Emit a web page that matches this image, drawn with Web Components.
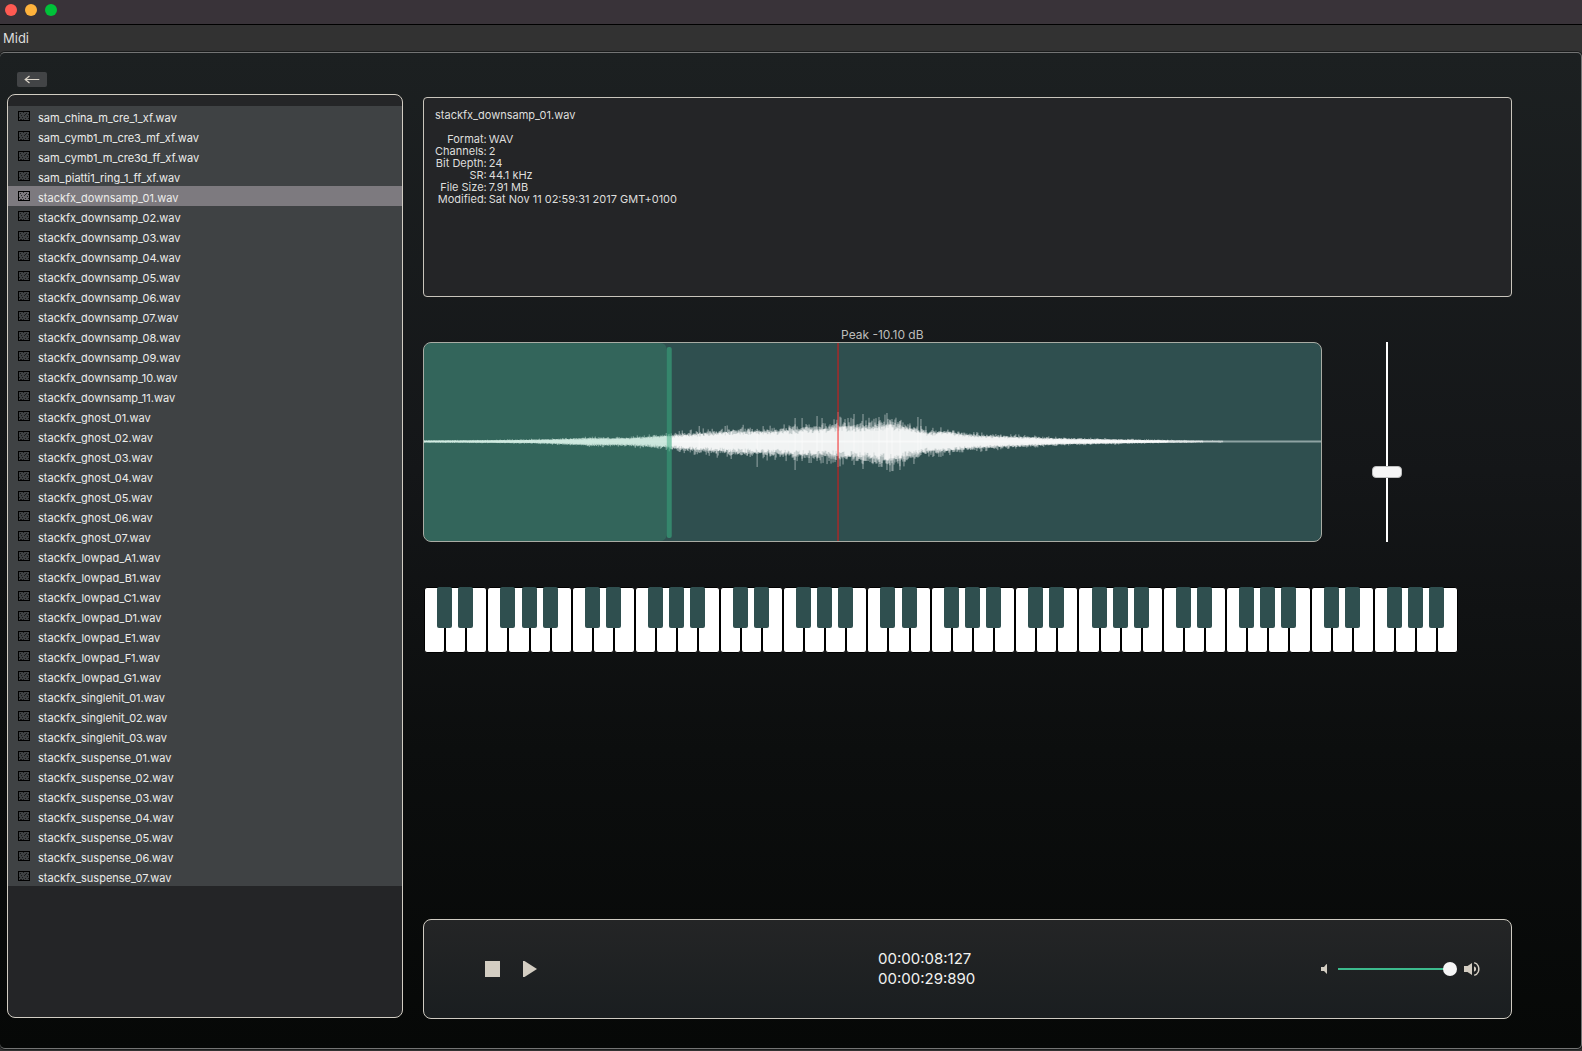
<!DOCTYPE html>
<html lang="en">
<head>
<meta charset="utf-8">
<title>Sample Browser</title>
<style>
html, body { margin: 0; height: 100%; background: #323232; }
body { font-family: Inter, "Liberation Sans", sans-serif; color: #dededc; }
</style>
</head>
<body>
<sample-app></sample-app>

<script>
const define = (name, html, setup) => {
  const tpl = document.createElement('template');
  tpl.innerHTML = html;
  customElements.define(name, class extends HTMLElement {
    constructor() {
      super();
      this.attachShadow({ mode: 'open' }).append(tpl.content.cloneNode(true));
    }
    connectedCallback() { if (setup) setup(this, this.shadowRoot); }
  });
};

define('title-bar', `
<style>
  :host { display: flex; align-items: flex-start; gap: 8px; box-sizing: border-box; height: 25px; padding: 4px 5px; background: #393339; border-bottom: 1px solid #000; }
  button { width: 12px; height: 12px; padding: 0; border: 0; border-radius: 50%; }
  .close { background: #ff5a52; } .min { background: #ffb23c; } .max { background: #00c239; }
</style>
<button class="close" aria-label="Close"></button><button class="min" aria-label="Minimise"></button><button class="max" aria-label="Zoom"></button>`);

define('menu-bar', `
<style>
  :host { display: flex; align-items: center; box-sizing: border-box; height: 27px; padding: 0 3px 2px; background: #323232; }
  button { border: 0; padding: 0; background: none; font: 13px/16px Inter, sans-serif; color: #dededc; }
</style>
<button><slot></slot></button>`);

define('back-button', `
<style>
  :host { display: block; height: 15px; }
  button { display: block; width: 30px; height: 15px; padding: 0; border: 0; border-radius: 2px; background: #424446; }
  svg { display: block; margin: auto; }
</style>
<button aria-label="Back"><svg width="16" height="9" viewBox="0 0 16 9" fill="none" stroke="#dcd6ca" stroke-width="1.2"><path d="M1 4.5H15.3M5.5 1 1.2 4.5 5.5 8"/></svg></button>`);

define('file-row', `
<style>
  :host { display: block; background: #3f4244; }
  :host([selected]) { background: #7d7a7f; }
  button { display: flex; align-items: center; gap: 8px; width: 100%; height: 20px; padding: 0 10px; border: 0; background: none; text-align: left; color: #ececea; font: 11px/14px Inter, sans-serif; }
  svg { flex: none; }
  span { padding-top: 3px; }
</style>
<button><svg width="12" height="10" viewBox="0 0 12 10" shape-rendering="crispEdges"><path fill="none" stroke="#000" d="M.5.5h11v9H.5z"/><path fill="#0c0c0c" fill-opacity=".75" d="M2 2h1v1H2zM5 1h1v1H5zM8 2h1v1H8zM10 3h1v1h-1zM3 4h1v1H3zM6 4h1v1H6zM9 5h1v1H9zM1 6h1v1H1zM4 6h1v1H4zM7 7h1v1H7zM2 8h2v1H2zM10 7h1v1h-1zM5 8h1v1H5zM7 3h1v1H7z"/></svg><span><slot></slot></span></button>`);

define('file-list', `
<style>
  :host { display: block; flex: 1; min-height: 0; box-sizing: border-box; border: 1px solid #d2cdc3; border-radius: 8px; background: #242527; padding: 11px 0; overflow: hidden; }
</style>
<slot></slot>`, (el) => {
  const series = (stem, names) => names.map(n => stem + n);
  const nums = n => Array.from({ length: n }, (_, i) => String(i + 1).padStart(2, '0'));
  const files = [
    'sam_china_m_cre_1_xf', 'sam_cymb1_m_cre3_mf_xf', 'sam_cymb1_m_cre3d_ff_xf', 'sam_piatti1_ring_1_ff_xf',
    ...series('stackfx_downsamp_', nums(11)),
    ...series('stackfx_ghost_', nums(7)),
    ...series('stackfx_lowpad_', ['A1', 'B1', 'C1', 'D1', 'E1', 'F1', 'G1']),
    ...series('stackfx_singlehit_', nums(3)),
    ...series('stackfx_suspense_', nums(7))
  ];
  el.append(...files.map(name => {
    const row = document.createElement('file-row');
    row.textContent = name + '.wav';
    row.toggleAttribute('selected', name === 'stackfx_downsamp_01');
    return row;
  }));
});

define('file-info', `
<style>
  :host { display: block; box-sizing: border-box; height: 200px; padding: 11px; border: 1px solid #c9c5bc; border-radius: 4px; background: #242527; font-size: 11px; line-height: 12px; }
  p { margin: 0 0 12px; }
  dl { display: grid; grid-template-columns: max-content 1fr; column-gap: 2px; margin: 0; }
  dt { text-align: right; } dd { margin: 0; }
</style>
<p>stackfx_downsamp_01.wav</p>
<dl>
  <dt>Format:</dt><dd>WAV</dd>
  <dt>Channels:</dt><dd>2</dd>
  <dt>Bit Depth:</dt><dd>24</dd>
  <dt>SR:</dt><dd>44.1 kHz</dd>
  <dt>File Size:</dt><dd>7.91 MB</dd>
  <dt>Modified:</dt><dd>Sat Nov 11 02:59:31 2017 GMT+0100</dd>
</dl>`);

define('wave-view', `
<style>
  :host { display: block; flex: 1; min-width: 0; }
  .peak { padding-left: 46.5%; font-size: 12px; line-height: 14px; color: #bdbdbb; white-space: nowrap; }
  .box { box-sizing: border-box; height: 200px; border: 1px solid #a9aca4; border-radius: 8px; background: #2f4f4f; overflow: hidden; }
  svg { display: block; width: 100%; height: 100%; }
</style>
<div class="peak"><slot></slot></div>
<div class="box"><svg viewBox="0 0 898 198" preserveAspectRatio="none" aria-hidden="true">
  <path d="M0 98.500H898" stroke="#8ea3a3" stroke-width="2"/>
  <g fill="none" stroke="#fff"><path id="spikes" stroke-opacity=".5"/><path id="body" stroke-opacity=".6"/><path id="core"/></g>
  <path d="M0 0H236Q243 0 243 7V191Q243 198 236 198H0Z" fill="#40b387" fill-opacity=".23"/>
  <rect x="243" y="4" width="5" height="191" rx="2" fill="#3aac80" fill-opacity=".6"/>
  <path d="M414.500 0V198" stroke="#f01414" stroke-opacity=".62" stroke-width="1.500"/>
</svg></div>`, (el, root) => {
  // Envelope points: position, then the usual reach of the samples above and below the centre line.
  const env = [[0,1,1],[60,1.4,1.4],[120,2.4,2.2],[165,4,4.500],[205,4,4.500],[240,7,7],[265,9,10],[310,13,14],[350,13,15],[372,15,17],[400,16,18],[420,20,20],[440,18,20],[465,23,25],[480,19,21],[495,14,16],[505,11,12],[522,13,13],[540,9,9],[560,7,8],[607,5,5],[640,3.500,3.500],[695,2.400,2.400],[740,1.500,1.500],[780,1,1],[898,1,1]];
  let seed = 20171111;
  const rnd = () => (seed = (seed * 1664525 + 1013904223) >>> 0) / 4294967296;
  const at = (x, k) => {
    let i = 1;
    while (env[i][0] < x) i++;
    const a = env[i - 1], b = env[i];
    return a[k] + (b[k] - a[k]) * (x - a[0]) / (b[0] - a[0]);
  };
  const build = (base, spread, power, end) => {
    let d = '';
    for (let x = .5; x < end; x += 1) {
      const up = at(x, 1) * (base + spread * Math.pow(rnd(), power));
      const dn = at(x, 2) * (base + spread * Math.pow(rnd(), power));
      d += `M${x} ${(98.5 - up).toFixed(1)}V${(98.5 + dn).toFixed(1)}`;
    }
    return d;
  };
  root.getElementById('spikes').setAttribute('d', build(.75, .55, 3, 800) + 'M414.5 69V124M430.5 71V122M439.500 71V126M463.5 70V127M468.5 76V128M476.5 78V127M494.5 74V112M497.5 76V112M275.5 83V110M333.5 88V124M371.5 75V127M378.5 75V118M393.500 73V118M398.5 75V114M455.5 74V124');
  root.getElementById('body').setAttribute('d', build(.62, .38, 1, 780));
  root.getElementById('core').setAttribute('d', build(.48, .3, 1, 745));
});

define('gain-fader', `
<style>
  :host { display: flex; justify-content: center; width: 130px; }
  input { appearance: none; writing-mode: vertical-lr; direction: rtl; width: 30px; height: 200px; margin: 0; background: linear-gradient(#fff, #fff) center / 2px 100% no-repeat; }
  input::-webkit-slider-thumb { appearance: none; box-sizing: border-box; width: 30px; height: 12px; border: 1px solid #bdbebe; border-radius: 4px; background: #f6f6f6; }
</style>
<input type="range" min="0" max="100" value="34" aria-label="Gain">`);

define('piano-key', `
<style>
  :host { display: block; flex: 1; position: relative; }
  button { display: block; padding: 0; border: 0; }
  .white { width: 100%; height: 66px; border: 1px solid #000; border-radius: 3px; background: #fff; }
  .black { display: none; position: absolute; z-index: 1; top: 0; left: 100%; margin-left: -8px; width: 15px; height: 41px; border-radius: 2px; background: #2f4f4f; }
  :host([sharp]) .black { display: block; }
</style>
<button class="white" aria-label="White key"></button><button class="black" aria-label="Black key"></button>`);

define('piano-keyboard', `
<style>
  :host { display: flex; width: 95%; margin-left: 1px; }
</style>
<slot></slot>`, (el) => {
  for (let i = 0; i < 49; i++) {
    const key = document.createElement('piano-key');
    key.toggleAttribute('sharp', i % 7 !== 2 && i % 7 !== 6);
    el.append(key);
  }
});

define('transport-bar', `
<style>
  :host { display: grid; grid-template-columns: 1fr 1fr 1fr; align-items: center; box-sizing: border-box; height: 100px; margin-top: auto; padding: 0 31px 0 60px; border: 1px solid #cfcbc2; border-radius: 8px; background: linear-gradient(#242526, #1a1e20); }
  button { padding: 0; border: 0; background: none; }
  svg { display: block; }
  .keys { display: flex; gap: 23px; }
  .time { margin-left: 62px; font-size: 15px; line-height: 20px; color: #f2f2f0; }
  .volume { display: flex; align-items: center; justify-content: flex-end; gap: 7px; }
  input { appearance: none; width: 122px; height: 14px; margin: 0; background: linear-gradient(#3cba8d, #3cba8d) center / 116px 2px no-repeat; }
  input::-webkit-slider-thumb { appearance: none; width: 14px; height: 14px; border-radius: 50%; background: #f6f6f6; }
</style>
<div class="keys">
  <button aria-label="Stop"><svg width="16" height="16" viewBox="0 0 16 16"><path fill="#d3cdc2" d="M1 0h15v16H1z"/></svg></button>
  <button aria-label="Play"><svg width="14" height="16" viewBox="0 0 14 16"><path fill="#d3cdc2" d="M0 0h1.5L14 8 1.5 16H0z"/></svg></button>
</div>
<div class="time"><div>00:00:08:127</div><div>00:00:29:890</div></div>
<div class="volume">
  <svg width="7" height="10" viewBox="0 0 7 10"><path fill="#d3cdc2" d="M0 3h3l2-2.5L6 0v10L3 7H0z"/></svg>
  <input type="range" min="0" max="100" value="100" aria-label="Volume">
  <svg width="16" height="14" viewBox="0 0 16 14"><path fill="#d3cdc2" d="M0 4h3.500L8 1v12L3.500 10H0zM10 4.200l2 1.500v2.600l-2 1.500z"/><path fill="none" stroke="#d3cdc2" stroke-width="1.500" d="M10.200.8q2.800.4 4 3.200 1.200 3 0 6-1.200 2.800-4 3.200"/></svg>
</div>`);

define('sample-app', `
<style>
  :host { display: flex; flex-direction: column; min-height: 100vh; }
  main { flex: 1; display: grid; grid-template-columns: 4fr 11fr; column-gap: 20px; margin-bottom: 2px; padding: 0 69px 0 7px; border: solid #737474; border-width: 1px 1px 1px 0; border-radius: 5px; background: linear-gradient(#1c2021, #141618 42%, #0c0e0e 70%, #060807); box-shadow: 0 0 0 1px #191b1b; }
  .files, .work { display: flex; flex-direction: column; min-width: 0; }
  .files { padding: 19px 0 30px; gap: 7px; }
  back-button { margin-left: 10px; }
  .work { padding: 44px 0 29px; }
  .wave { display: flex; align-items: flex-end; margin: 31px 60px 45px 0; }
</style>
<title-bar></title-bar>
<menu-bar>Midi</menu-bar>
<main>
  <section class="files"><back-button></back-button><file-list></file-list></section>
  <section class="work">
    <file-info></file-info>
    <div class="wave"><wave-view>Peak -10.10 dB</wave-view><gain-fader></gain-fader></div>
    <piano-keyboard></piano-keyboard>
    <transport-bar></transport-bar>
  </section>
</main>`);
</script>
</body>
</html>
